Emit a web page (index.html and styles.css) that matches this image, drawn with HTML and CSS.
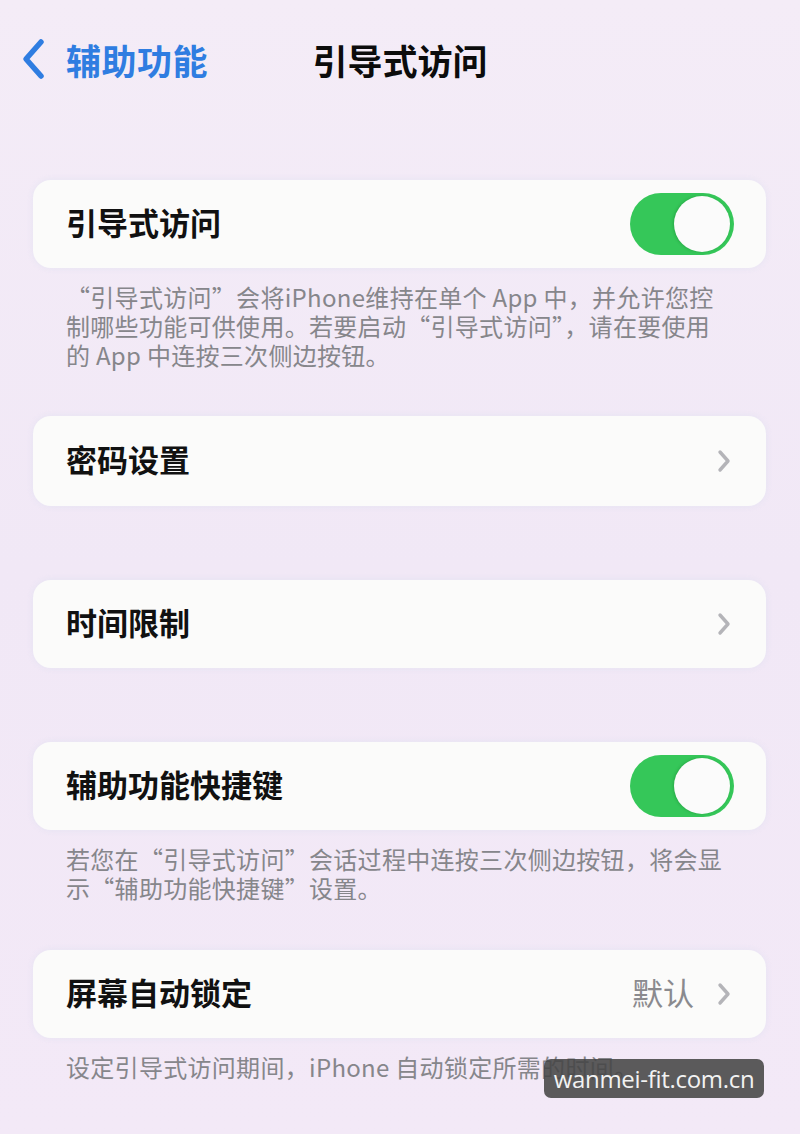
FILE: index.html
```html
<!DOCTYPE html>
<html lang="zh-CN">
<head>
<meta charset="utf-8">
<title>引导式访问</title>
<link rel="stylesheet" href="styles.css">
</head>
<body>
<div class="screen">
  <header class="nav">
    <div class="back">
      <svg class="back-icon" viewBox="0 0 26 42" width="26" height="42"><path d="M21 4 L6 21 L21 38" fill="none" stroke="#2f7de1" stroke-width="5.5" stroke-linecap="round" stroke-linejoin="round"/></svg>
      <span class="back-label">辅助功能</span>
    </div>
    <h1 class="nav-title">引导式访问</h1>
  </header>

  <main class="content">
    <section class="group g1">
      <div class="card">
        <span class="label">引导式访问</span>
        <span class="toggle"><span class="knob"></span></span>
      </div>
      <p class="note">“引导式访问”会将iPhone维持在单个 App 中，并允许您控<br>制哪些功能可供使用。若要启动“引导式访问”，请在要使用<br>的 App 中连按三次侧边按钮。</p>
    </section>

    <section class="group g2">
      <div class="card">
        <span class="label">密码设置</span>
        <svg class="chev" viewBox="0 0 16 24" width="16" height="24"><path d="M4 3 L12 12 L4 21" fill="none" stroke="#b4b4b8" stroke-width="3.4" stroke-linecap="round" stroke-linejoin="round"/></svg>
      </div>
    </section>

    <section class="group g3">
      <div class="card">
        <span class="label">时间限制</span>
        <svg class="chev" viewBox="0 0 16 24" width="16" height="24"><path d="M4 3 L12 12 L4 21" fill="none" stroke="#b4b4b8" stroke-width="3.4" stroke-linecap="round" stroke-linejoin="round"/></svg>
      </div>
    </section>

    <section class="group g4">
      <div class="card">
        <span class="label">辅助功能快捷键</span>
        <span class="toggle"><span class="knob"></span></span>
      </div>
      <p class="note">若您在“引导式访问”会话过程中连按三次侧边按钮，将会显<br>示“辅助功能快捷键”设置。</p>
    </section>

    <section class="group g5">
      <div class="card">
        <span class="label">屏幕自动锁定</span>
        <span class="value">默认</span>
        <svg class="chev" viewBox="0 0 16 24" width="16" height="24"><path d="M4 3 L12 12 L4 21" fill="none" stroke="#b4b4b8" stroke-width="3.4" stroke-linecap="round" stroke-linejoin="round"/></svg>
      </div>
      <p class="note">设定引导式访问期间，iPhone 自动锁定所需的时间。</p>
    </section>
  </main>

  <div class="watermark">wanmei-fit.com.cn</div>
</div>
</body>
</html>
```

FILE: styles.css
```css
* { box-sizing: border-box; }

html, body {
  margin: 0;
  padding: 0;
}

body {
  background: #f3eaf6;
  font-family: "Noto Sans CJK SC", "Noto Sans", sans-serif;
  color: #111;
}

.screen {
  position: relative;
  width: 800px;
  height: 1134px;
  overflow: hidden;
  background: linear-gradient(180deg, #f4ecf7 0%, #f1e8f6 50%, #f3e9f7 100%);
}

.nav {
  position: relative;
  height: 118px;
  display: flex;
  align-items: center;
  padding-left: 20px;
}

.back {
  display: flex;
  align-items: center;
  gap: 20px;
}

.back-icon {
  display: block;
}

.back-label {
  color: #2f7de1;
  font-size: 35px;
  font-weight: 600;
  letter-spacing: 0.5px;
}

.nav-title {
  position: absolute;
  left: 0;
  right: 0;
  top: 0;
  bottom: 0;
  margin: 0;
  display: flex;
  align-items: center;
  justify-content: center;
  font-size: 35px;
  font-weight: 600;
  color: #0c0c0c;
  pointer-events: none;
}

.content {
  padding: 0 34px 0 33px;
  display: flex;
  flex-direction: column;
}

.g1 { margin-top: 62px; }
.g2 { margin-top: 47px; }
.g3 { margin-top: 74px; }
.g4 { margin-top: 74px; }
.g5 { margin-top: 48px; }

.card {
  height: 88px;
  background: #fbfbfa;
  border-radius: 18px;
  display: flex;
  align-items: center;
  padding: 0 32px 0 33px;
  box-shadow: 0 0 6px rgba(220, 224, 240, 0.6);
}

.g2 .card { height: 90px; }

.label {
  flex: 1;
  font-size: 31px;
  font-weight: 600;
  color: #111;
  margin-bottom: 5px;
}

.value {
  font-size: 31px;
  color: #8a8a8e;
  margin-right: 22px;
  margin-bottom: 5px;
}

.chev {
  display: block;
  margin-right: 2px;
}

.toggle {
  width: 104px;
  height: 62px;
  border-radius: 31px;
  background: #35c759;
  display: flex;
  align-items: center;
  justify-content: flex-end;
  padding-right: 4px;
}

.knob {
  width: 56px;
  height: 56px;
  border-radius: 50%;
  background: #fbfbfb;
  box-shadow: -1px 0 3px rgba(0, 80, 20, 0.25);
}

.note {
  margin: 14px 0 0 0;
  padding-left: 33px;
  font-size: 24px;
  letter-spacing: 0.3px;
  line-height: 29px;
  color: #86868b;
  white-space: nowrap;
}

.watermark {
  position: absolute;
  left: 544px;
  top: 1059px;
  width: 220px;
  height: 39px;
  border-radius: 7px;
  background: rgba(70, 70, 70, 0.88);
  color: #f2f2f2;
  font-family: "Open Sans", "Noto Sans", sans-serif;
  font-size: 24px;
  line-height: 39px;
  text-align: center;
  letter-spacing: -0.3px;
}
```
